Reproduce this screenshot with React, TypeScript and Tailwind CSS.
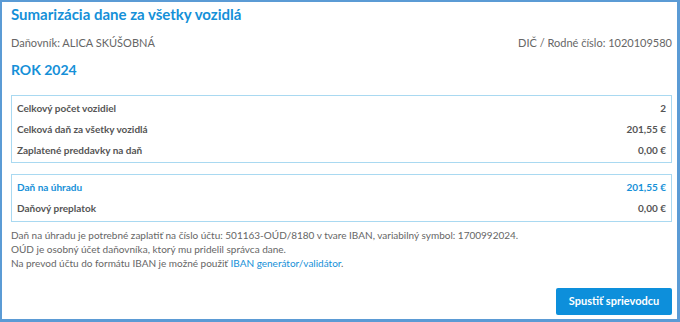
import React from "react";

const font = { fontFamily: 'Lato, "Open Sans", sans-serif' };

function Row({ label, value, accent }: { label: string; value: string; accent?: boolean }) {
  return (
    <div className={`flex justify-between items-center h-[21px] text-[10px] font-bold ${accent ? "text-[#1590d8]" : "text-[#555]"}`}>
      <span>{label}</span>
      <span>{value}</span>
    </div>
  );
}

export default function App() {
  return (
    <div
      className="w-[680px] h-[322px] bg-white border-[#5b9bd5] border-t-2 border-l-2 border-r-[3px] border-b-[3px] pl-[9px] pr-[5px] pt-[1px] flex flex-col"
      style={font}
    >
      <h1 className="text-[15px] font-bold text-[#1590d8] leading-[22px]">
        Sumarizácia dane za všetky vozidlá
      </h1>
      <div className="flex justify-between text-[11px] text-[#666] mt-[10px] leading-[16px]">
        <span>Daňovník: ALICA SKÚŠOBNÁ</span>
        <span>DIČ / Rodné číslo: 1020109580</span>
      </div>
      <div className="text-[14px] font-bold text-[#1590d8] mt-[9px] leading-[20px]">ROK 2024</div>

      <div className="mt-[15px] border border-[#a9d9f1] px-[5px] pt-[2px] pb-[1px]">
        <Row label="Celkový počet vozidiel" value="2" />
        <Row label="Celková daň za všetky vozidlá" value="201,55 €" />
        <Row label="Zaplatené preddavky na daň" value="0,00 €" />
      </div>

      <div className="mt-[11px] border border-[#a9d9f1] px-[5px] pt-[2px] pb-[2px]">
        <Row label="Daň na úhradu" value="201,55 €" accent />
        <Row label="Daňový preplatok" value="0,00 €" />
      </div>

      <div className="mt-[6px] text-[10px] leading-[14px] text-[#666]">
        <p>Daň na úhradu je potrebné zaplatiť na číslo účtu: 501163-OÚD/8180 v tvare IBAN, variabilný symbol: 1700992024.</p>
        <p>OÚD je osobný účet daňovníka, ktorý mu pridelil správca dane.</p>
        <p>
          Na prevod účtu do formátu IBAN je možné použiť{" "}
          <a className="text-[#1590d8]">IBAN generátor/validátor</a>.
        </p>
      </div>

      <div className="mt-auto mb-[4px] flex justify-end">
        <button className="w-[116px] h-[27px] bg-[#0d8fdb] rounded-[2px] text-white text-[11px] font-bold">
          Spustiť sprievodcu
        </button>
      </div>
    </div>
  );
}
